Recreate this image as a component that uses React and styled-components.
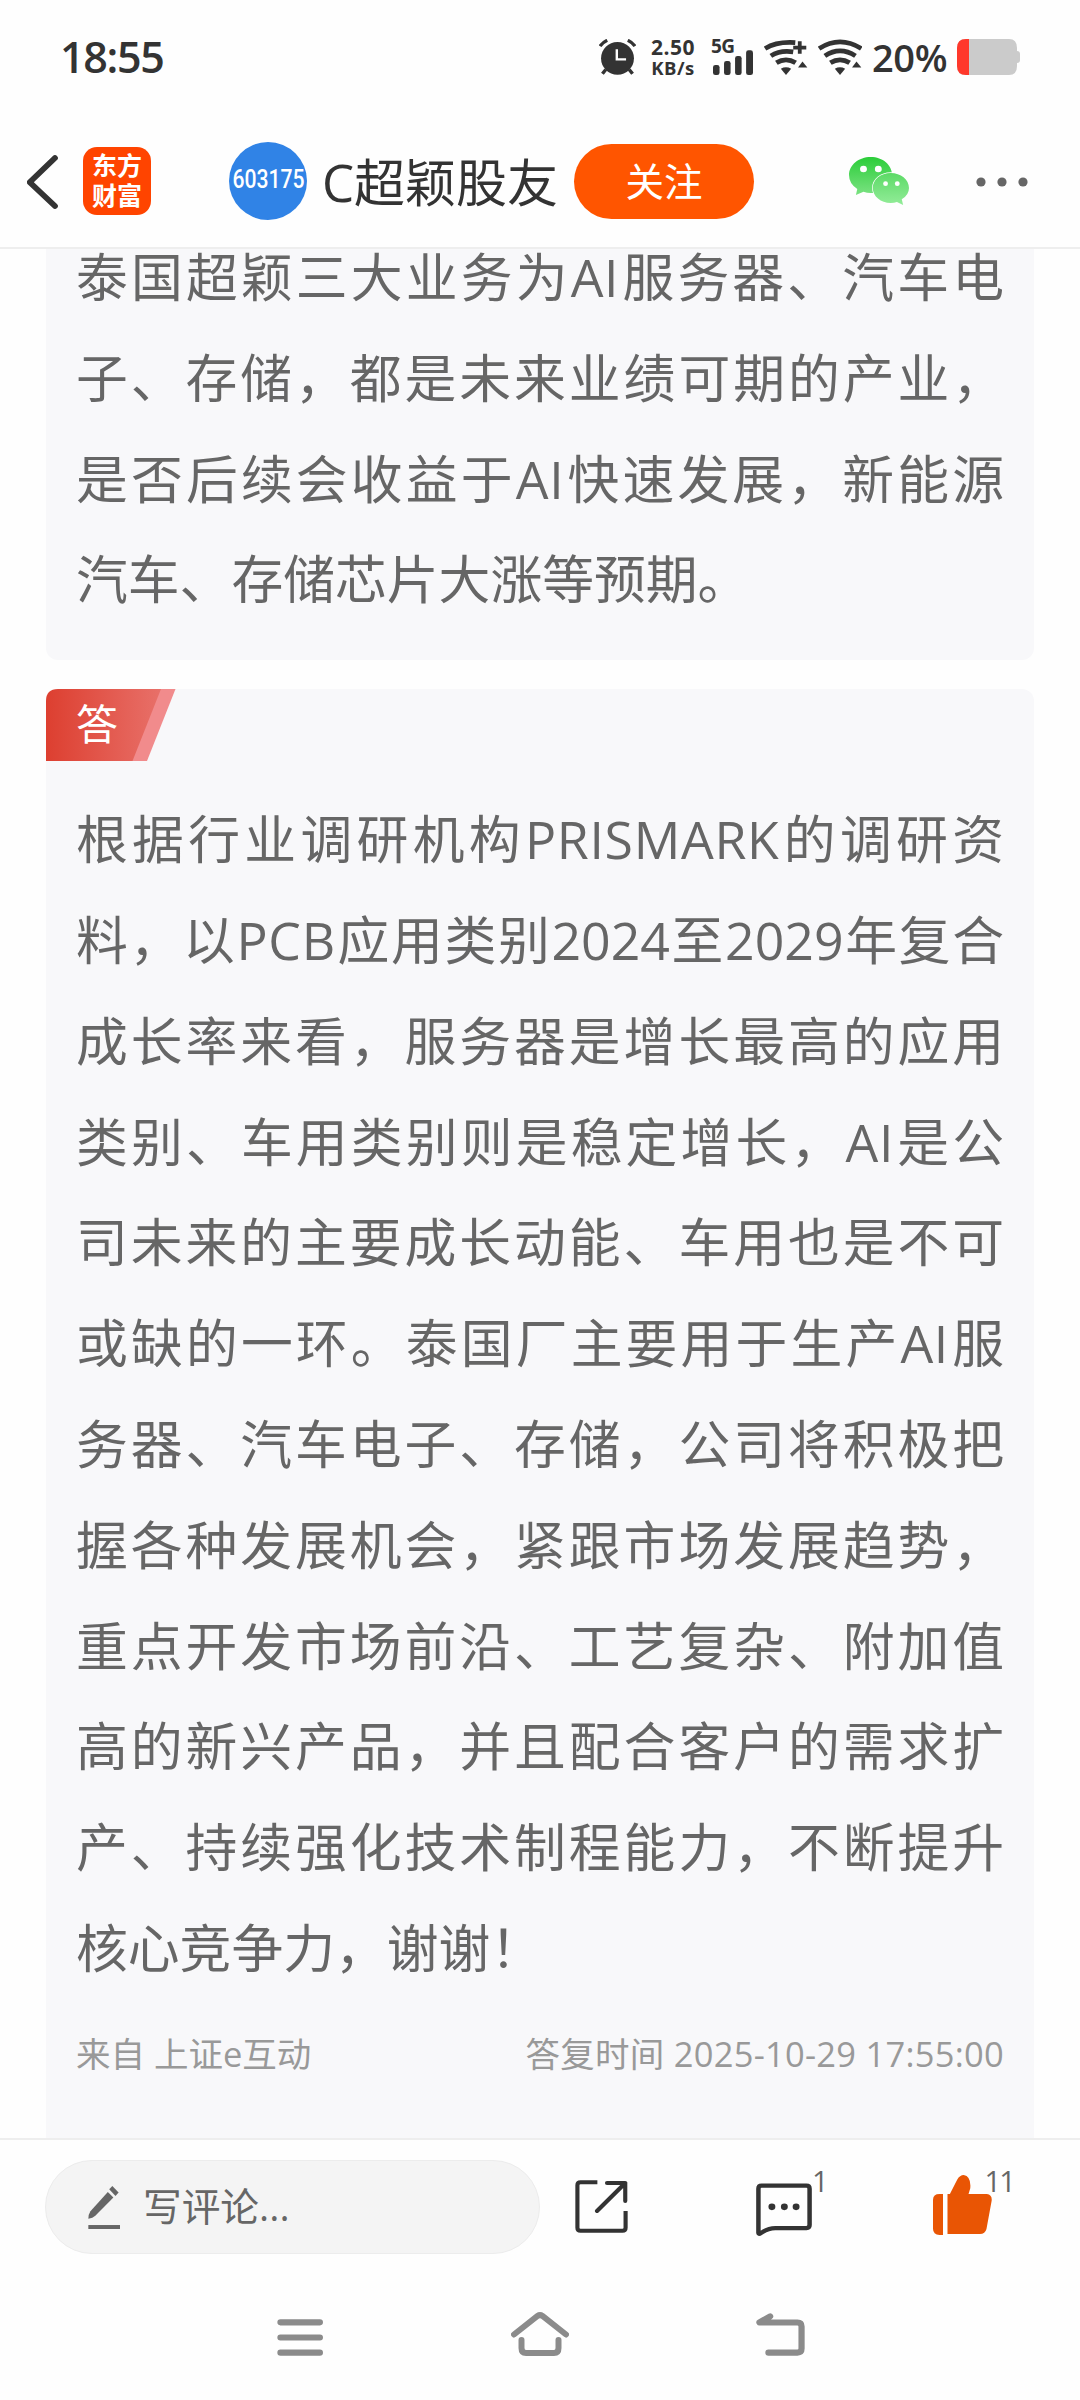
import React from "react";
import styled, { createGlobalStyle } from "styled-components";

const Global = createGlobalStyle`
  * { box-sizing: border-box; }
  body {
    margin: 0;
    background: #fefefe;
    font-family: "Open Sans", "Noto Sans CJK SC", sans-serif;
    text-spacing-trim: space-all;
    text-autospace: no-autospace;
  }
`;

const Screen = styled.div`
  width: 1080px;
  height: 2400px;
  display: flex;
  flex-direction: column;
  overflow: hidden;
  background: #fefefe;
`;

const Icon = styled.svg.attrs({ preserveAspectRatio: "none" })`
  display: block;
  flex: none;
  width: ${(p) => p.$w}px;
  height: ${(p) => p.$h}px;
  margin: ${(p) => p.$m || 0};
`;

/* status bar */
const StatusBar = styled.div`
  height: 114px;
  flex: none;
  display: flex;
  align-items: center;
  padding-left: 60px;
  color: #333;
`;
const Clock = styled.div`
  width: 539px;
  font-size: 43px;
  line-height: 60px;
  font-weight: 600;
  letter-spacing: -1.3px;
`;
const Speed = styled.div`
  width: 50px;
  margin-left: 12px;
  text-align: center;
  font-weight: 700;
  font-size: 21px;
  line-height: 20px;
  letter-spacing: 0.5px;
  white-space: nowrap;
`;
const SpeedUnit = styled.div`
  font-size: 18.5px;
  line-height: 21px;
`;
const Signal = styled.div`
  width: 42px;
  height: 36px;
  margin-left: 13px;
  display: grid;
`;
const Network = styled.span`
  grid-area: 1 / 1;
  font-size: 19px;
  font-weight: 700;
  line-height: 14px;
  letter-spacing: -0.5px;
`;
const Bars = styled(Icon)`
  grid-area: 1 / 1;
  align-self: end;
`;
const Percent = styled.div`
  width: 95px;
  padding-left: 10px;
  font-size: 38px;
  line-height: 50px;
  font-weight: 600;
  letter-spacing: -0.4px;
`;

/* title bar */
const TitleBar = styled.header`
  height: 135px;
  flex: none;
  display: flex;
  align-items: center;
  border-bottom: 2px solid #eee;
  padding: 0 0 0 27px;
`;
const AppLogo = styled.div`
  width: 68px;
  height: 68px;
  margin-left: 25px;
  border-radius: 14px;
  background: #ff4400;
  color: #fff;
  font-weight: 700;
  font-size: 25px;
  line-height: 30px;
  text-align: center;
  padding-top: 3px;
`;
const Avatar = styled.div`
  width: 78px;
  height: 78px;
  margin-left: 78px;
  border-radius: 50%;
  background: #3083e6;
  color: #fff;
  display: flex;
  align-items: center;
  justify-content: center;
`;
const Code = styled.span`
  font-family: Roboto, sans-serif;
  font-weight: 500;
  font-size: 25.5px;
  line-height: 30px;
  padding-bottom: 3px;
  transform: scaleX(0.83);
`;
const Title = styled.h1`
  margin: 2px 0 0 15px;
  width: 252px;
  white-space: nowrap;
  font-weight: 400;
  font-size: 51px;
  line-height: 70px;
  color: #333;
`;
const Follow = styled.button`
  width: 180px;
  height: 75px;
  margin-top: 2px;
  border: 0;
  padding: 0;
  border-radius: 38px;
  background: #ff5500;
  color: #fff;
  font: inherit;
  font-size: 38.5px;
  line-height: 75px;
`;

/* content */
const Content = styled.main`
  flex: none;
  height: 1889px;
  overflow: hidden;
  padding: 0 46px;
`;
const Card = styled.section`
  background: #f8f8fa;
  border-radius: 12px;
  color: #666;
`;
const Question = styled(Card)`
  margin-top: -22px;
  padding: 0 30px 30px;
`;
const Answer = styled(Card)`
  margin-top: 29px;
  height: 1500px;
`;
const Tag = styled.div`
  display: grid;
  width: 130px;
  height: 72px;
`;
const TagShape = styled(Icon)`
  grid-area: 1 / 1;
`;
const TagText = styled.span`
  grid-area: 1 / 1;
  padding-left: 30px;
  color: #fff;
  font-size: 42px;
  line-height: 69px;
`;
const AnswerText = styled.div`
  padding: 28px 30px 0;
`;
const Line = styled.div`
  height: 100.8px;
  line-height: 100.8px;
  font-size: 51.8px;
  white-space: nowrap;
  text-align: justify;
  text-align-last: ${(p) => (p.$end ? "left" : "justify")};
`;
const Latin = styled.span`
  letter-spacing: 0.7px;
`;
const Meta = styled.div`
  display: flex;
  justify-content: space-between;
  padding: 30px 30px 0;
  font-size: 34.5px;
  line-height: 50px;
  color: #999;
`;
const ReplyTime = styled.span`
  letter-spacing: 0.25px;
`;

/* action bar */
const Actions = styled.footer`
  flex: none;
  height: 138px;
  border-top: 2px solid #eee;
  display: flex;
  align-items: flex-start;
  padding: 20px 0 0 45px;
`;
const CommentBox = styled.div`
  width: 495px;
  height: 94px;
  border: 1px solid #ececec;
  border-radius: 47px;
  background: #f4f4f4;
  display: flex;
  align-items: center;
  padding-left: 42px;
  color: #666;
  font-size: 38.7px;
`;
const Placeholder = styled.span`
  margin-left: 23px;
  padding-bottom: 3px;
  line-height: 60px;
`;
const Count = styled.span`
  font-size: 29px;
  line-height: 30px;
  color: #666;
  letter-spacing: -2px;
  margin: 6px 0 0 ${(p) => p.$x}px;
`;

/* system navigation */
const NavBar = styled.nav`
  flex: none;
  height: 122px;
  display: flex;
  align-items: flex-start;
  color: #8b8b8b;
  padding: 2px 0 0 277px;
`;

const QUESTION = [
  "泰国超颖三大业务为AI服务器、汽车电",
  "子、存储，都是未来业绩可期的产业，",
  "是否后续会收益于AI快速发展，新能源",
  "汽车、存储芯片大涨等预期。",
];
const ANSWER = [
  "根据行业调研机构PRISMARK的调研资",
  "料，以PCB应用类别2024至2029年复合",
  "成长率来看，服务器是增长最高的应用",
  "类别、车用类别则是稳定增长，AI是公",
  "司未来的主要成长动能、车用也是不可",
  "或缺的一环。泰国厂主要用于生产AI服",
  "务器、汽车电子、存储，公司将积极把",
  "握各种发展机会，紧跟市场发展趋势，",
  "重点开发市场前沿、工艺复杂、附加值",
  "高的新兴产品，并且配合客户的需求扩",
  "产、持续强化技术制程能力，不断提升",
  "核心竞争力，谢谢！",
];

const Lines = ({ items }) =>
  items.map((t, i) => (
    <Line key={t} $end={i === items.length - 1}>
      {t.split(/([A-Z]+)/).map((s, j) => (j % 2 ? <Latin key={j}>{s}</Latin> : s))}
    </Line>
  ));

const Wifi = ({ plus, m }) => (
  <Icon $w={44} $h={36} $m={m} viewBox="808 116 128 109">
    <g fill="none" stroke="#333" strokeWidth="14">
      <path d={plus ? "M811 145Q845 123 899 127" : "M811 145Q872 104 934 145"} />
      <path d={plus ? "M828 167Q855 149 893 155" : "M828 167Q872 137 917 167"} />
      <path d="M844 188Q872 170 900 188" />
    </g>
    <path d="M857 206Q872 197 887 206L872 225Z" fill="#333" />
    <path d="M920 184L934 202H907Z" fill="#333" />
    {plus && <path d="M893 142H931M912 123V161" stroke="#333" strokeWidth="11" />}
  </Icon>
);

export default function App() {
  return (
    <Screen>
      <Global />
      <StatusBar>
        <Clock>18:55</Clock>
        <Icon $w={37} $h={36} viewBox="171 116 108 110">
          <g stroke="#333" strokeWidth="10" fill="none">
            <path d="M174 138Q182 126 195 120M276 138Q268 126 255 120" />
            <path d="M191 209L181 222M259 209L269 222" />
          </g>
          <ellipse cx="225" cy="175" rx="48" ry="50" fill="#333" />
          <path d="M223 147V178H250" stroke="#fff" strokeWidth="7" fill="none" />
        </Icon>
        <Speed>
          <div>2.50</div>
          <SpeedUnit>KB/s</SpeedUnit>
        </Speed>
        <Signal>
          <Network>5G</Network>
          <Bars $w={40} $h={25} $m="0 0 0 2px" viewBox="505 150 116 75">
            <g fill="#333">
              <rect x="505" y="195" width="19" height="30" rx="7" />
              <rect x="537" y="183" width="19" height="42" rx="7" />
              <rect x="569" y="168" width="19" height="57" rx="7" />
              <rect x="601" y="151" width="20" height="74" rx="7" />
            </g>
          </Bars>
        </Signal>
        <Wifi plus m="0 0 0 11px" />
        <Wifi m="0 0 0 10px" />
        <Percent>20%</Percent>
        <Icon $w={63} $h={36} viewBox="0 0 63 36">
          <path d="M9 0H52Q60 0 60 9V12Q63 12 63 15V21Q63 24 60 24V27Q60 36 52 36H9Q0 36 0 27V9Q0 0 9 0Z" fill="#cbcbcb" />
          <path d="M12 0H9Q0 0 0 9V27Q0 36 9 36H12Z" fill="#ff382b" />
        </Icon>
      </StatusBar>

      <TitleBar>
        <Icon $w={31} $h={54} $m="2px 0 0" viewBox="79 463 91 163">
          <path d="M161 472L87 545L161 617" fill="none" stroke="#333" strokeWidth="17" strokeLinecap="round" strokeLinejoin="round" />
        </Icon>
        <AppLogo>
          东方
          <br />
          财富
        </AppLogo>
        <Avatar>
          <Code>603175</Code>
        </Avatar>
        <Title>C超颖股友</Title>
        <Follow>关注</Follow>
        <Icon $w={60} $h={48} $m="1px 0 0 95px" viewBox="897 470 174 144">
          <defs>
            <linearGradient id="big" x1="0" y1="0" x2="0" y2="1">
              <stop offset="0" stopColor="#2bcd39" />
              <stop offset="1" stopColor="#7be282" />
            </linearGradient>
            <linearGradient id="small" x1="0" y1="0" x2="0" y2="1">
              <stop offset="0" stopColor="#5cda66" />
              <stop offset="1" stopColor="#93ec99" />
            </linearGradient>
          </defs>
          <path d="M960 470C995 470 1022 494 1022 524S995 578 960 578Q949 578 939 574L917 584L921 566Q897 550 897 524C897 494 925 470 960 470Z" fill="url(#big)" />
          <path d="M1018 518C1047 518 1071 538 1071 563Q1071 584 1050 597L1054 614L1036 605Q1028 608 1018 608C989 608 966 588 966 563S989 518 1018 518Z" fill="url(#small)" stroke="#fefefe" strokeWidth="4" paintOrder="stroke" />
          <g fill="#fff">
            <circle cx="939" cy="506" r="10" />
            <circle cx="982" cy="506" r="10" />
            <circle cx="1003" cy="550" r="7" />
            <circle cx="1037" cy="550" r="7" />
          </g>
        </Icon>
        <Icon $w={52} $h={10} $m="2px 0 0 67px" viewBox="0 0 52 10">
          <g fill="#666">
            <circle cx="5" cy="5" r="4.6" />
            <circle cx="26" cy="5" r="4.6" />
            <circle cx="47" cy="5" r="4.6" />
          </g>
        </Icon>
      </TitleBar>

      <Content>
        <Question>
          <Lines items={QUESTION} />
        </Question>
        <Answer>
          <Tag>
            <TagShape $w={130} $h={72} viewBox="0 0 130 72">
              <defs>
                <linearGradient id="tag" x1="0" y1="0" x2="1" y2="0">
                  <stop offset="0" stopColor="#dd3f30" />
                  <stop offset="1" stopColor="#e87069" />
                </linearGradient>
              </defs>
              <path d="M100 0H129.5L101 72H80Z" fill="#f18b8c" />
              <path d="M12 0H115L86.500 72H0V12Q0 0 12 0Z" fill="url(#tag)" />
            </TagShape>
            <TagText>答</TagText>
          </Tag>
          <AnswerText>
            <Lines items={ANSWER} />
          </AnswerText>
          <Meta>
            <span>来自 上证e互动</span>
            <ReplyTime>答复时间 2025-10-29 17:55:00</ReplyTime>
          </Meta>
        </Answer>
      </Content>

      <Actions>
        <CommentBox>
          <Icon $w={32} $h={43} viewBox="256 161 92 130">
            <g fill="#666">
              <path d="M313 179L329 196L277 251Q270 258 257 260Q257 246 263 237Z" />
              <path d="M326 161L344 181L335 191L317 171Z" />
              <rect x="257" y="279" width="91" height="12" />
            </g>
          </Icon>
          <Placeholder>写评论...</Placeholder>
        </CommentBox>
        <Icon $w={53} $h={53} $m="20px 0 0 35px" viewBox="102 150 154 159">
          <g fill="none" stroke="#333" strokeWidth="12">
            <path d="M167 157H118Q109 157 109 166V293Q109 302 118 302H240Q249 302 249 293V243" />
            <path d="M195 159H248V213M248 159L166 243" strokeLinecap="round" strokeLinejoin="round" />
          </g>
        </Icon>
        <Icon $w={56} $h={53} $m="23px 0 0 128px" viewBox="629 158 162 160">
          <path d="M645 166H775Q784 166 784 175V285Q784 294 775 294H685Q665 294 648 306L640 311Q636 312 636 308V175Q636 166 645 166Z" fill="none" stroke="#333" strokeWidth="13" />
          <g fill="#333">
            <circle cx="675" cy="230" r="10" />
            <circle cx="711" cy="230" r="10" />
            <circle cx="745" cy="230" r="10" />
          </g>
        </Icon>
        <Count $x={0}>1</Count>
        <Icon $w={59} $h={60} $m="15px 0 0 106px" viewBox="1141 135 171 180">
          <g fill="#e95504">
            <path d="M1170 192V315H1160Q1141 313 1141 296V210Q1141 192 1160 192Z" />
            <path d="M1183 192H1190L1211 149Q1219 135 1230 135Q1252 139 1249 175L1244 192H1297Q1313 194 1311 212L1296 297Q1292 312 1277 312H1183Z" />
          </g>
        </Icon>
        <Count $x={-7}>11</Count>
      </Actions>

      <NavBar>
        <Icon $w={46} $h={37} $m="41px 0 0" viewBox="804 566 134 110">
          <path d="M814 576H929M814 621H929M814 666H929" stroke="#8b8b8b" strokeWidth="18" strokeLinecap="round" />
        </Icon>
        <Icon $w={58} $h={44} $m="34px 0 0 188px" viewBox="0 0 58 44">
          <path d="M3 22.500L26.500 4Q29 2.300 31.500 4L55 22.500M10.500 28V36Q10.500 41 15 41H43Q47.500 41 47.500 36V28" fill="none" stroke="#8b8b8b" strokeWidth="6" strokeLinecap="round" />
        </Icon>
        <Icon $w={49} $h={43} $m="35px 0 0 187px" viewBox="626 548 142 128">
          <path d="M667 558L636 576H746Q758 576 758 588V654Q758 666 746 666H662" fill="none" stroke="#8b8b8b" strokeWidth="18" strokeLinecap="round" strokeLinejoin="round" />
        </Icon>
      </NavBar>
    </Screen>
  );
}
